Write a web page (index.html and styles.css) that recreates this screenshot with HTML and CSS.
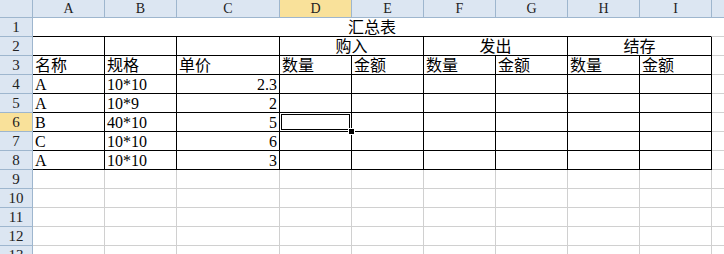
FILE: index.html
```html
<!DOCTYPE html>
<html lang="zh-CN">
<head>
  <meta charset="UTF-8">
  <title>汇总表</title>
  <link rel="stylesheet" href="styles.css">
</head>
<body>

  <div class="sheet">
    <!-- column headers -->
    <div class="hd corner"></div>
    <div class="hd col">A</div>
    <div class="hd col">B</div>
    <div class="hd col">C</div>
    <div class="hd col active">D</div>
    <div class="hd col">E</div>
    <div class="hd col">F</div>
    <div class="hd col">G</div>
    <div class="hd col">H</div>
    <div class="hd col">I</div>
    <div class="hd col"></div>

    <!-- row 1 -->
    <div class="hd row">1</div>
    <div class="cell title span9">汇总表</div>
    <div class="cell"></div>

    <!-- row 2 -->
    <div class="hd row">2</div>
    <div class="cell box"></div>
    <div class="cell box"></div>
    <div class="cell box"></div>
    <div class="cell box center span2">购入</div>
    <div class="cell box center span2">发出</div>
    <div class="cell box center span2">结存</div>
    <div class="cell"></div>

    <!-- row 3 -->
    <div class="hd row">3</div>
    <div class="cell box">名称</div>
    <div class="cell box">规格</div>
    <div class="cell box">单价</div>
    <div class="cell box">数量</div>
    <div class="cell box">金额</div>
    <div class="cell box">数量</div>
    <div class="cell box">金额</div>
    <div class="cell box">数量</div>
    <div class="cell box">金额</div>
    <div class="cell"></div>

    <!-- row 4 -->
    <div class="hd row">4</div>
    <div class="cell box">A</div>
    <div class="cell box">10*10</div>
    <div class="cell box num">2.3</div>
    <div class="cell box"></div>
    <div class="cell box"></div>
    <div class="cell box"></div>
    <div class="cell box"></div>
    <div class="cell box"></div>
    <div class="cell box"></div>
    <div class="cell"></div>

    <!-- row 5 -->
    <div class="hd row">5</div>
    <div class="cell box">A</div>
    <div class="cell box">10*9</div>
    <div class="cell box num">2</div>
    <div class="cell box"></div>
    <div class="cell box"></div>
    <div class="cell box"></div>
    <div class="cell box"></div>
    <div class="cell box"></div>
    <div class="cell box"></div>
    <div class="cell"></div>

    <!-- row 6 -->
    <div class="hd row active">6</div>
    <div class="cell box">B</div>
    <div class="cell box">40*10</div>
    <div class="cell box num">5</div>
    <div class="cell box selected"><span class="handle"></span></div>
    <div class="cell box"></div>
    <div class="cell box"></div>
    <div class="cell box"></div>
    <div class="cell box"></div>
    <div class="cell box"></div>
    <div class="cell"></div>

    <!-- row 7 -->
    <div class="hd row">7</div>
    <div class="cell box">C</div>
    <div class="cell box">10*10</div>
    <div class="cell box num">6</div>
    <div class="cell box"></div>
    <div class="cell box"></div>
    <div class="cell box"></div>
    <div class="cell box"></div>
    <div class="cell box"></div>
    <div class="cell box"></div>
    <div class="cell"></div>

    <!-- row 8 -->
    <div class="hd row">8</div>
    <div class="cell box">A</div>
    <div class="cell box">10*10</div>
    <div class="cell box num">3</div>
    <div class="cell box"></div>
    <div class="cell box"></div>
    <div class="cell box"></div>
    <div class="cell box"></div>
    <div class="cell box"></div>
    <div class="cell box"></div>
    <div class="cell"></div>

    <!-- empty rows -->
    <div class="hd row">9</div>
    <div class="cell"></div><div class="cell"></div><div class="cell"></div><div class="cell"></div><div class="cell"></div>
    <div class="cell"></div><div class="cell"></div><div class="cell"></div><div class="cell"></div><div class="cell"></div>

    <div class="hd row">10</div>
    <div class="cell"></div><div class="cell"></div><div class="cell"></div><div class="cell"></div><div class="cell"></div>
    <div class="cell"></div><div class="cell"></div><div class="cell"></div><div class="cell"></div><div class="cell"></div>

    <div class="hd row">11</div>
    <div class="cell"></div><div class="cell"></div><div class="cell"></div><div class="cell"></div><div class="cell"></div>
    <div class="cell"></div><div class="cell"></div><div class="cell"></div><div class="cell"></div><div class="cell"></div>

    <div class="hd row">12</div>
    <div class="cell"></div><div class="cell"></div><div class="cell"></div><div class="cell"></div><div class="cell"></div>
    <div class="cell"></div><div class="cell"></div><div class="cell"></div><div class="cell"></div><div class="cell"></div>

    <div class="hd row">13</div>
    <div class="cell"></div><div class="cell"></div><div class="cell"></div><div class="cell"></div><div class="cell"></div>
    <div class="cell"></div><div class="cell"></div><div class="cell"></div><div class="cell"></div><div class="cell"></div>
  </div>

</body>
</html>
```

FILE: styles.css
```css
body {
  margin: 0;
  background: #fff;
  overflow: hidden;
  font-family: "Liberation Serif", "Noto Sans CJK SC", serif;
}
.sheet {
  display: grid;
  grid-template-columns: 33px 72px 72px 103px 72px 72px 72px 72px 72px 72px 40px;
  grid-template-rows: 18px;
  grid-auto-rows: 19px;
  width: 724px;
  height: 254px;
  overflow: hidden;
}
.sheet > div {
  box-sizing: border-box;
}
.hd {
  background: #dce6f2;
  border-right: 1px solid #9eb6ce;
  border-bottom: 1px solid #9eb6ce;
  color: #222;
  display: flex;
  align-items: center;
  justify-content: center;
}
.hd.col {
  font-size: 14px;
  padding-top: 1px;
}
.hd.row {
  font-size: 15px;
}
.hd.active {
  background: #f9e19a;
}
.cell {
  position: relative;
  border-right: 1px solid #d0d0d0;
  border-bottom: 1px solid #d0d0d0;
  font-size: 16px;
  line-height: 17px;
  color: #000;
  padding: 0 2px;
  display: flex;
  align-items: flex-end;
  white-space: nowrap;
}
.box {
  border-right-color: #000;
  border-bottom-color: #000;
}
.title {
  justify-content: center;
  border-right-color: #fff;
  border-bottom-color: #000;
}
.center {
  justify-content: center;
}
.num {
  justify-content: flex-end;
}
.span9 {
  grid-column: span 9;
}
.span2 {
  grid-column: span 2;
}
.selected {
  overflow: visible;
}
.selected::after {
  content: "";
  position: absolute;
  left: -1px;
  top: -1px;
  right: -1px;
  bottom: -1px;
  border: 1px solid #000;
  box-shadow: inset 0 0 0 1px #fff, inset 0 0 0 2px #000;
}
.handle {
  position: absolute;
  right: -4px;
  bottom: -4px;
  width: 5px;
  height: 5px;
  background: #000;
  border: 1px solid #fff;
  z-index: 2;
}
```
